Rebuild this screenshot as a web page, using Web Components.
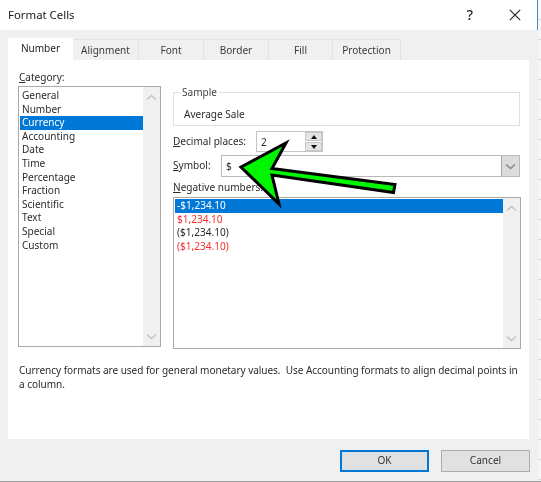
<!DOCTYPE html>
<html lang="en"><head><meta charset="utf-8"><title>Format Cells</title>
<style>
html,body{margin:0;padding:0;background:#fff}
body{font:10.05px/13.6px "Noto Sans","Open Sans",sans-serif;color:#2b2b2b;width:541px;height:482px;overflow:hidden}
u{text-decoration-thickness:1px;text-underline-offset:1px}
</style></head><body>
<fc-dialog>
  <fc-titlebar slot="title">Format Cells</fc-titlebar>
  <fc-tabs slot="tabs">
    <fc-tab active>Number</fc-tab><fc-tab>Alignment</fc-tab><fc-tab>Font</fc-tab><fc-tab>Border</fc-tab><fc-tab>Fill</fc-tab><fc-tab>Protection</fc-tab>
  </fc-tabs>
  <fc-number-panel slot="panel">
    <span slot="category-label"><u>C</u>ategory:</span>
    <fc-listbox slot="category" style="height:261px;--pad-top:2px">
      <fc-option>General</fc-option><fc-option>Number</fc-option><fc-option selected>Currency</fc-option><fc-option>Accounting</fc-option><fc-option>Date</fc-option><fc-option>Time</fc-option><fc-option>Percentage</fc-option><fc-option>Fraction</fc-option><fc-option>Scientific</fc-option><fc-option>Text</fc-option><fc-option>Special</fc-option><fc-option>Custom</fc-option>
    </fc-listbox>
    <fc-sample slot="sample">Average Sale</fc-sample>
    <fc-spinner slot="decimal" value="2"><u>D</u>ecimal places:</fc-spinner>
    <fc-combo slot="symbol" value="$"><u>S</u>ymbol:</fc-combo>
    <span slot="negative-label"><u>N</u>egative numbers:</span>
    <fc-listbox slot="negative" style="height:152px;--pad-top:1px">
      <fc-option selected>-$1,234.10</fc-option><fc-option red>$1,234.10</fc-option><fc-option>($1,234.10)</fc-option><fc-option red>($1,234.10)</fc-option>
    </fc-listbox>
    <span slot="description">Currency formats are used for general monetary values.&nbsp; Use Accounting formats to align decimal points in a column.</span>
  </fc-number-panel>
  <fc-button slot="footer" default>OK</fc-button>
  <fc-button slot="footer">Cancel</fc-button>
  <fc-arrow slot="overlay"></fc-arrow>
</fc-dialog>
<script>
function def(name, html, init){
  customElements.define(name, class extends HTMLElement{
    constructor(){super();const r=this.attachShadow({mode:'open'});r.innerHTML=html;}
    connectedCallback(){ if(init) init(this); }
  });
}
const chevUp='<svg width="11" height="7" viewBox="0 0 11 7"><path d="M1 5.5 5.5 1.5 10 5.5" fill="none" stroke="#c4c4c4" stroke-width="1.6"/></svg>';
const chevDown='<svg width="11" height="7" viewBox="0 0 11 7"><path d="M1 1.5 5.5 5.5 10 1.5" fill="none" stroke="#c4c4c4" stroke-width="1.6"/></svg>';

def('fc-dialog',`<style>
:host{display:flex;width:541px;height:482px;position:relative;overflow:hidden;background:#f0f0f0}
.win{width:538px;height:481px;display:flex;flex-direction:column;background:#f0f0f0;filter:blur(.3px)}
.body{padding:0 9px 0 8px;flex:1;display:flex;flex-direction:column}
.foot{display:flex;justify-content:flex-end;gap:12px;padding:11px 0 0;margin-right:-1px}
.strip{position:absolute;left:538px;top:0;width:3px;height:482px;background:repeating-linear-gradient(#f6f6f6 0 19px,#d8d8d8 19px 20px)}
.edge{position:absolute;left:0;top:481px;width:541px;height:1px;background:#9a9a9a}
.blue{position:absolute;left:537px;top:0;width:1px;height:30px;background:#3b8ed8}
</style>
<div class="win"><slot name="title"></slot><div class="body"><slot name="tabs"></slot><slot name="panel"></slot><div class="foot"><slot name="footer"></slot></div></div></div>
<div class="strip"></div><div class="edge"></div><div class="blue"></div><slot name="overlay"></slot>`);

def('fc-titlebar',`<style>
:host{display:flex;align-items:center;height:30px;background:#fff;padding:0 0 0 8px;font-size:11.4px;color:#1a1a1a}
.t{flex:1}
.q{width:14px;text-align:center;font-size:14px;margin-right:32px;color:#222;font-weight:500}
svg{margin-right:17px;display:block}
</style><span class="t"><slot></slot></span><span class="q">?</span>
<svg width="12" height="12" viewBox="0 0 12 12"><path d="M.8.8 11.2 11.2M11.2.8.8 11.2" stroke="#222" stroke-width="1.1" fill="none"/></svg>`);

def('fc-tabs',`<style>
:host{display:grid;grid-template-columns:65px 66px 65px 65px 64px 68px;justify-content:start;height:30px;align-items:end}
</style><slot></slot>`);

def('fc-tab',`<style>
:host{display:flex;align-items:center;justify-content:center;height:21px;background:#f0f0f0;border:1px solid #e2e2e2;border-bottom:0;border-left:0;box-sizing:border-box;color:#3a3a3a;position:relative;padding-top:1px}
:host([active]){height:22px;background:#fff;border:0;color:#222;padding-top:0;padding-bottom:1px}
</style><slot></slot>`);

def('fc-number-panel',`<style>
:host{display:block;background:#fff;height:379px;box-sizing:border-box;padding:10px 8px 0 10px}
.cols{display:grid;grid-template-columns:143px 348px;column-gap:12px}
.lbl{height:16px;padding-left:1px;line-height:14px}
.r{padding-top:14px;display:flex;flex-direction:column}
.neglbl{height:18px;line-height:16px;margin-top:2px}
.desc{margin:14px 0 0 1px;width:505px;line-height:14px;letter-spacing:-.05px}
::slotted([slot=decimal]){margin-top:5px}
::slotted([slot=symbol]){margin-top:3px}
</style>
<div class="cols"><div><div class="lbl"><slot name="category-label"></slot></div><slot name="category"></slot></div>
<div class="r"><slot name="sample"></slot><slot name="decimal"></slot><slot name="symbol"></slot><div class="neglbl"><slot name="negative-label"></slot></div><slot name="negative"></slot></div></div>
<div class="desc"><slot name="description"></slot></div>`);

def('fc-listbox',`<style>
:host{display:flex;box-sizing:border-box;border:1.5px solid #a9a9a9;background:#fff;padding:var(--pad-top,1px) 0 0 1px}
.items{flex:1;display:flex;flex-direction:column;min-width:0}
.sb{width:17px;margin-top:calc(0px - var(--pad-top,1px));background:#f0f0f0;display:flex;flex-direction:column;justify-content:space-between;align-items:center;padding:7px 0 6px;box-sizing:border-box}
svg{display:block}
</style><div class="items"><slot></slot></div><div class="sb">${chevUp}${chevDown}</div>`);

def('fc-option',`<style>
:host{display:block;height:13.6px;line-height:13.6px;padding-left:2px;color:#2b2b2b}
:host([selected]){background:#0078d7;color:#fff}
:host([red]){color:#f23030}
</style><slot></slot>`);

def('fc-sample',`<style>
:host{display:block}
fieldset{margin:0;padding:1px 10px 4px 10px;border:1px solid #e0e0e0;height:42px;box-sizing:border-box;min-width:0;width:347px}
legend{padding:0 2px;margin-left:-4px;line-height:16px;color:#444}
div{line-height:14px;padding-top:6px}
</style><fieldset><legend>Sample</legend><div><slot></slot></div></fieldset>`);

def('fc-spinner',`<style>
:host{display:flex;align-items:center;height:21px}
.l{width:83px}
.box{width:67px;height:21px;box-sizing:border-box;border:1px solid #c4c4c4;display:flex;background:#fff}
.v{flex:1;padding:3px 0 0 4px;line-height:14px}
.s{width:17px;display:flex;flex-direction:column;gap:1px;background:#fff}
.b{flex:1;background:#e4e4e4;border:1px solid #c8c8c8;display:flex;align-items:center;justify-content:center}
i{display:block;width:0;height:0;border:3.5px solid transparent}
.u i{border-top:0;border-bottom:4px solid #111}
.d i{border-bottom:0;border-top:4px solid #111}
</style><span class="l"><slot></slot></span><div class="box"><span class="v"></span><div class="s"><div class="b u"><i></i></div><div class="b d"><i></i></div></div></div>`,
el=>{el.shadowRoot.querySelector('.v').textContent=el.getAttribute('value')});

def('fc-combo',`<style>
:host{display:flex;align-items:center;height:22px}
.l{width:48px}
.box{width:299px;height:22px;box-sizing:border-box;border:1px solid #b9b9b9;display:flex;background:#fff}
.v{flex:1;padding:3px 0 0 4px;line-height:14px}
.b{width:17px;background:#dcdcdc;border-left:1px solid #aaa;display:flex;align-items:center;justify-content:center}
path{stroke:#8a8a8a}
</style><span class="l"><slot></slot></span><div class="box"><span class="v"></span><div class="b">${chevDown}</div></div>`,
el=>{el.shadowRoot.querySelector('.v').textContent=el.getAttribute('value')});

def('fc-button',`<style>
:host{display:flex;align-items:center;justify-content:center;width:89px;height:22px;box-sizing:border-box;background:#e1e1e1;border:1px solid #adadad;color:#333}
:host([default]){border:2px solid #0078d7}
</style><slot></slot>`);

def('fc-arrow',`<style>
:host{display:block;position:absolute;left:0;top:0;width:541px;height:482px;pointer-events:none;filter:blur(.3px)}
svg{display:block}
</style><svg width="541" height="482" viewBox="0 0 541 482"><polygon points="241,167 286,143 272,168.500 395,184.500 393.500,192.500 272,175 279,204" fill="#00f500" stroke="#000" stroke-width="3" stroke-linejoin="miter"/></svg>`);
</script>
</body></html>
